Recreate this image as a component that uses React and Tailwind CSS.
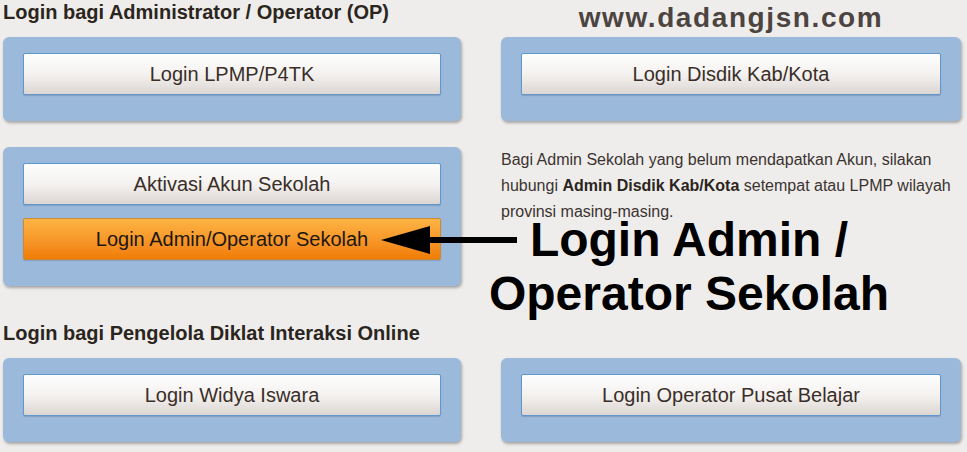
import React from 'react';

const LoginButton = ({ label, orange = false }) => (
    <button
        className={
            orange
                ? 'w-full h-[42px] rounded-[2px] border border-[#c98a3a] bg-gradient-to-b from-[#fdb443] to-[#f07c00] text-[20px] text-[#1d1710] shadow-[0_1px_1px_rgba(0,0,0,0.15)]'
                : 'w-full h-[42px] rounded-[2px] border border-[#5f97cf] bg-gradient-to-b from-[#fefefe] via-[#f4f2f0] to-[#dcd6d2] text-[20px] text-[#3a2e28] shadow-[0_1px_1px_rgba(0,0,0,0.15)]'
        }
    >
        {label}
    </button>
);

const Panel = ({ children }) => (
    <div className="rounded-[6px] bg-[#9bb9db] px-[20px] pt-[16px] pb-[26px] flex flex-col gap-[13px] shadow-[1px_2px_3px_rgba(0,0,0,0.3)]">
        {children}
    </div>
);

export default function App() {
    return (
        <div
            className="relative w-[967px] h-[452px] overflow-hidden bg-[#efedeb] pl-[3px] pr-[6px]"
            style={{ fontFamily: '"Liberation Sans", Arial, sans-serif' }}
        >
            {/* Administrator / Operator */}
            <div className="grid grid-cols-[458px_460px] gap-x-[40px]">
                <h2 className="h-[37px] text-[20px] leading-6 font-bold text-[#2b2520]">
                    Login bagi Administrator / Operator (OP)
                </h2>
                <div className="h-[37px] pt-[2px] text-center text-[28px] leading-8 font-bold tracking-[1.6px] text-[#4b4440]">
                    www.dadangjsn.com
                </div>

                <Panel>
                    <LoginButton label="Login LPMP/P4TK" />
                </Panel>
                <Panel>
                    <LoginButton label="Login Disdik Kab/Kota" />
                </Panel>
            </div>

            <div className="grid grid-cols-[458px_460px] gap-x-[40px] mt-[26px] items-start">
                <Panel>
                    <LoginButton label="Aktivasi Akun Sekolah" />
                    <LoginButton label="Login Admin/Operator Sekolah" orange />
                </Panel>
                <p className="text-[16px] leading-[26px] text-[#3b3330]">
                    Bagi Admin Sekolah yang belum mendapatkan Akun, silakan hubungi{' '}
                    <b className="text-[#2b2520]">Admin Disdik Kab/Kota</b> setempat atau LPMP wilayah provinsi masing-masing.
                </p>
            </div>

            {/* Diklat Interaksi Online */}
            <h2 className="mt-[35px] mb-[13px] text-[20px] leading-6 font-bold text-[#2b2520]">
                Login bagi Pengelola Diklat Interaksi Online
            </h2>
            <div className="grid grid-cols-[458px_460px] gap-x-[40px]">
                <Panel>
                    <LoginButton label="Login Widya Iswara" />
                </Panel>
                <Panel>
                    <LoginButton label="Login Operator Pusat Belajar" />
                </Panel>
            </div>

            {/* annotation */}
            <svg className="absolute left-[378px] top-[222px]" width="142" height="36" viewBox="0 0 142 36">
                <polygon points="3,18 52,4 52,32" fill="#000" />
                <rect x="50" y="15" width="89" height="6" fill="#000" />
            </svg>
            <div className="absolute left-[480px] top-[213px] w-[418px] text-center text-[48px] leading-[54px] font-bold text-black">
                Login Admin /
                <br />
                Operator Sekolah
            </div>
        </div>
    );
}
